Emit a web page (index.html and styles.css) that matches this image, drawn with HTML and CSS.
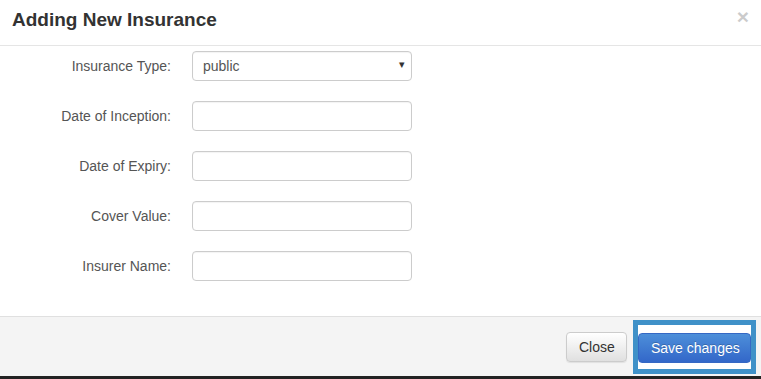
FILE: index.html
```html
<!DOCTYPE html>
<html>
<head>
  <title>Adding New Insurance</title>
  <link rel="stylesheet" href="styles.css">
</head>
<body>
  <div class="modal">
    <div class="modal-header">
      <h4 class="modal-title">Adding New Insurance</h4>
      <button type="button" class="close">&times;</button>
    </div>
    <form class="modal-body">
      <label class="field-label" for="ins_type">Insurance Type:</label>
      <div class="select-wrap">
        <select id="ins_type" class="field">
          <option>public</option>
          <option>private</option>
        </select>
        <span class="caret">&#9662;</span>
      </div>
      <label class="field-label" for="inception">Date of Inception:</label>
      <input id="inception" class="field">
      <label class="field-label" for="expiry">Date of Expiry:</label>
      <input id="expiry" class="field">
      <label class="field-label" for="cover">Cover Value:</label>
      <input id="cover" class="field">
      <label class="field-label" for="insurer">Insurer Name:</label>
      <input id="insurer" class="field">
    </form>
    <div class="modal-footer">
      <button type="button" class="btn btn-default">Close</button>
      <span class="focus-ring">
        <button type="button" class="btn btn-primary">Save changes</button>
      </span>
    </div>
  </div>
  <div class="backdrop-strip"></div>
</body>
</html>
```

FILE: styles.css
```css
body {
  margin: 0;
  font-family: 'Liberation Sans', Arial, sans-serif;
  font-size: 14px;
  color: #333;
  background: #fff;
}
.modal { width: 761px; background: #fff; }

.modal-header {
  height: 45px;
  border-bottom: 1px solid #e5e5e5;
  display: flex; justify-content: space-between; align-items: flex-start;
  padding: 0 12px;
  box-sizing: content-box;
}
.modal-title {
  margin: 10px 0 0; font-size: 19px; line-height: 20px;
  font-weight: bold; color: #333;
}
.close {
  margin: 6px 0 0; padding: 0; border: none; background: none;
  font-family: 'Liberation Sans', Arial, sans-serif;
  font-size: 21px; font-weight: bold; line-height: 21px;
  color: #000; opacity: 0.2; cursor: pointer;
}

.modal-body {
  display: grid;
  grid-template-columns: 171px 220px;
  column-gap: 21px; row-gap: 20px;
  align-items: center;
  padding: 5px 0 35px;
  margin: 0;
}
.field-label { text-align: right; color: #555; line-height: 20px; }
.field {
  box-sizing: border-box;
  width: 220px; height: 30px;
  border: 1px solid #ccc; border-radius: 4px;
  background: #fff; padding: 0 10px;
  font: 14px 'Liberation Sans', Arial, sans-serif; color: #555;
  box-shadow: inset 0 1px 1px rgba(0,0,0,0.05);
  outline: none;
}
.select-wrap { position: relative; width: 220px; }
.select-wrap select { appearance: none; -webkit-appearance: none; }
.caret {
  position: absolute; right: 7px; top: 7px;
  font-size: 11px; color: #333; pointer-events: none;
}

.modal-footer {
  height: 58px;
  border-top: 1px solid #e0e0e0;
  background: #f4f4f4;
  display: flex; justify-content: flex-end; align-items: center;
  gap: 6px; padding: 1px 5px 0 0;
  box-sizing: content-box;
}
.btn {
  box-sizing: border-box;
  font: 14px 'Liberation Sans', Arial, sans-serif;
  line-height: 16px; padding: 6px 12px;
  border-radius: 4px; cursor: pointer;
  white-space: nowrap;
}
.btn-default {
  width: 61px;
  color: #333; border: 1px solid #ccc;
  background: linear-gradient(to bottom, #fff 0, #e0e0e0 100%);
  box-shadow: 0 1px 1px rgba(0,0,0,0.08);
  margin-top: -1px;
}
.focus-ring {
  display: flex;
  border: 5px solid #3f91c8;
  background: #fff;
  padding: 8px 0 6px;
}
.btn-primary {
  width: 113px; height: 30px;
  color: #fff; border: 1px solid #3568c4;
  background: linear-gradient(to bottom, #4d8fd9 0, #3367c9 100%);
  text-shadow: 0 -1px 0 rgba(0,0,0,0.2);
}

.backdrop-strip { height: 4px; background: #222; }
```
